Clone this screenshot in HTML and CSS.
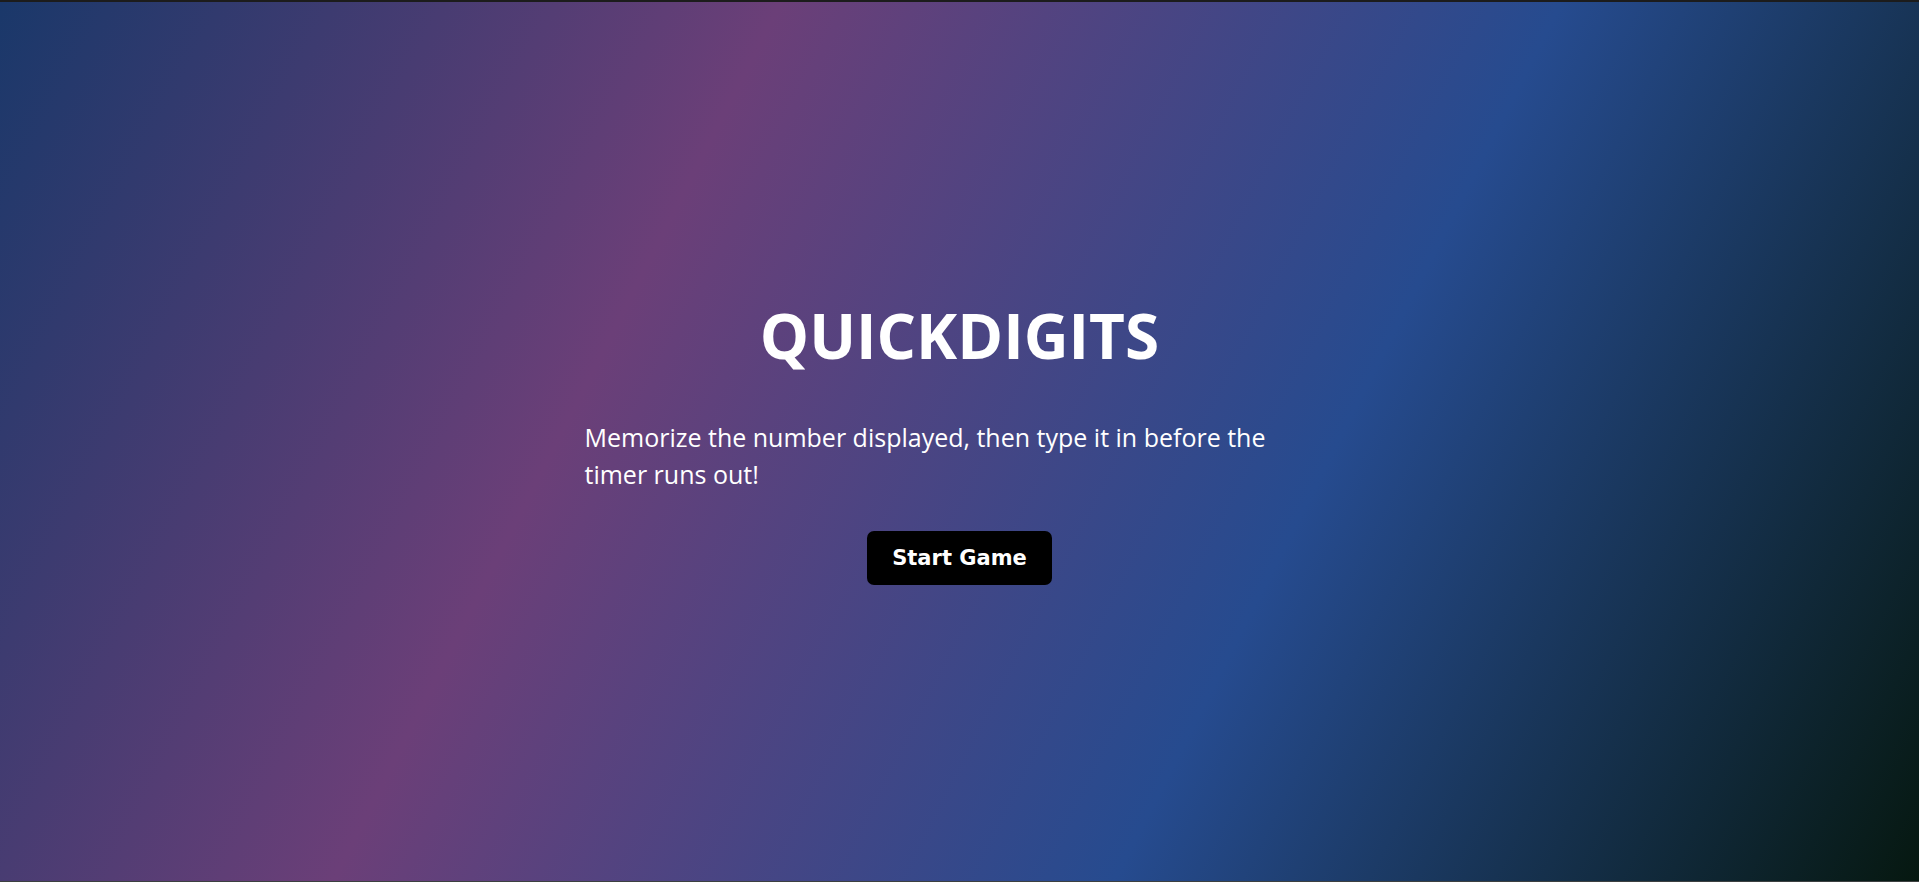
FILE: index.html
```html
<!DOCTYPE html>
<html lang="en">
<head>
<meta charset="utf-8">
<title>QuickDigits</title>
<link rel="stylesheet" href="styles.css">
</head>
<body>
<main class="screen">
  <section class="start">
    <h1 class="title">QUICKDIGITS</h1>
    <p class="intro">Memorize the number displayed, then type it in before the timer runs out!</p>
    <button class="start-btn" type="button">Start Game</button>
  </section>
</main>
</body>
</html>
```
FILE: styles.css
```css
html, body {
  margin: 0;
  padding: 0;
  height: 100%;
}
body {
  background: #1b1b1b;
}
.screen {
  box-sizing: border-box;
  height: 100vh;
  border-top: 2px solid #1c1c1c;
  border-bottom: 1px solid #3c4040;
  background: linear-gradient(117deg, #1a386a 0%, #6b3f78 33%, #264b8f 66%, #061810 100%);
  display: flex;
  align-items: center;
  justify-content: center;
  font-family: "Open Sans", "Noto Sans", sans-serif;
  color: #ffffff;
}
.start {
  width: 750px;
  display: flex;
  flex-direction: column;
  align-items: center;
}
.title {
  margin: 0 0 46px;
  font-size: 62px;
  font-weight: 700;
  line-height: 1.2;
  letter-spacing: 0;
}
.intro {
  align-self: stretch;
  box-sizing: border-box;
  padding-right: 10px;
  margin: 0 0 38px;
  font-size: 25px;
  line-height: 1.48;
  text-align: left;
}
.start-btn {
  padding: 0 25px;
  height: 54px;
  border: none;
  border-radius: 7px;
  background: #000000;
  color: #ffffff;
  font-family: "DejaVu Sans", Verdana, sans-serif;
  font-weight: 700;
  font-size: 21px;
  cursor: pointer;
}
```
